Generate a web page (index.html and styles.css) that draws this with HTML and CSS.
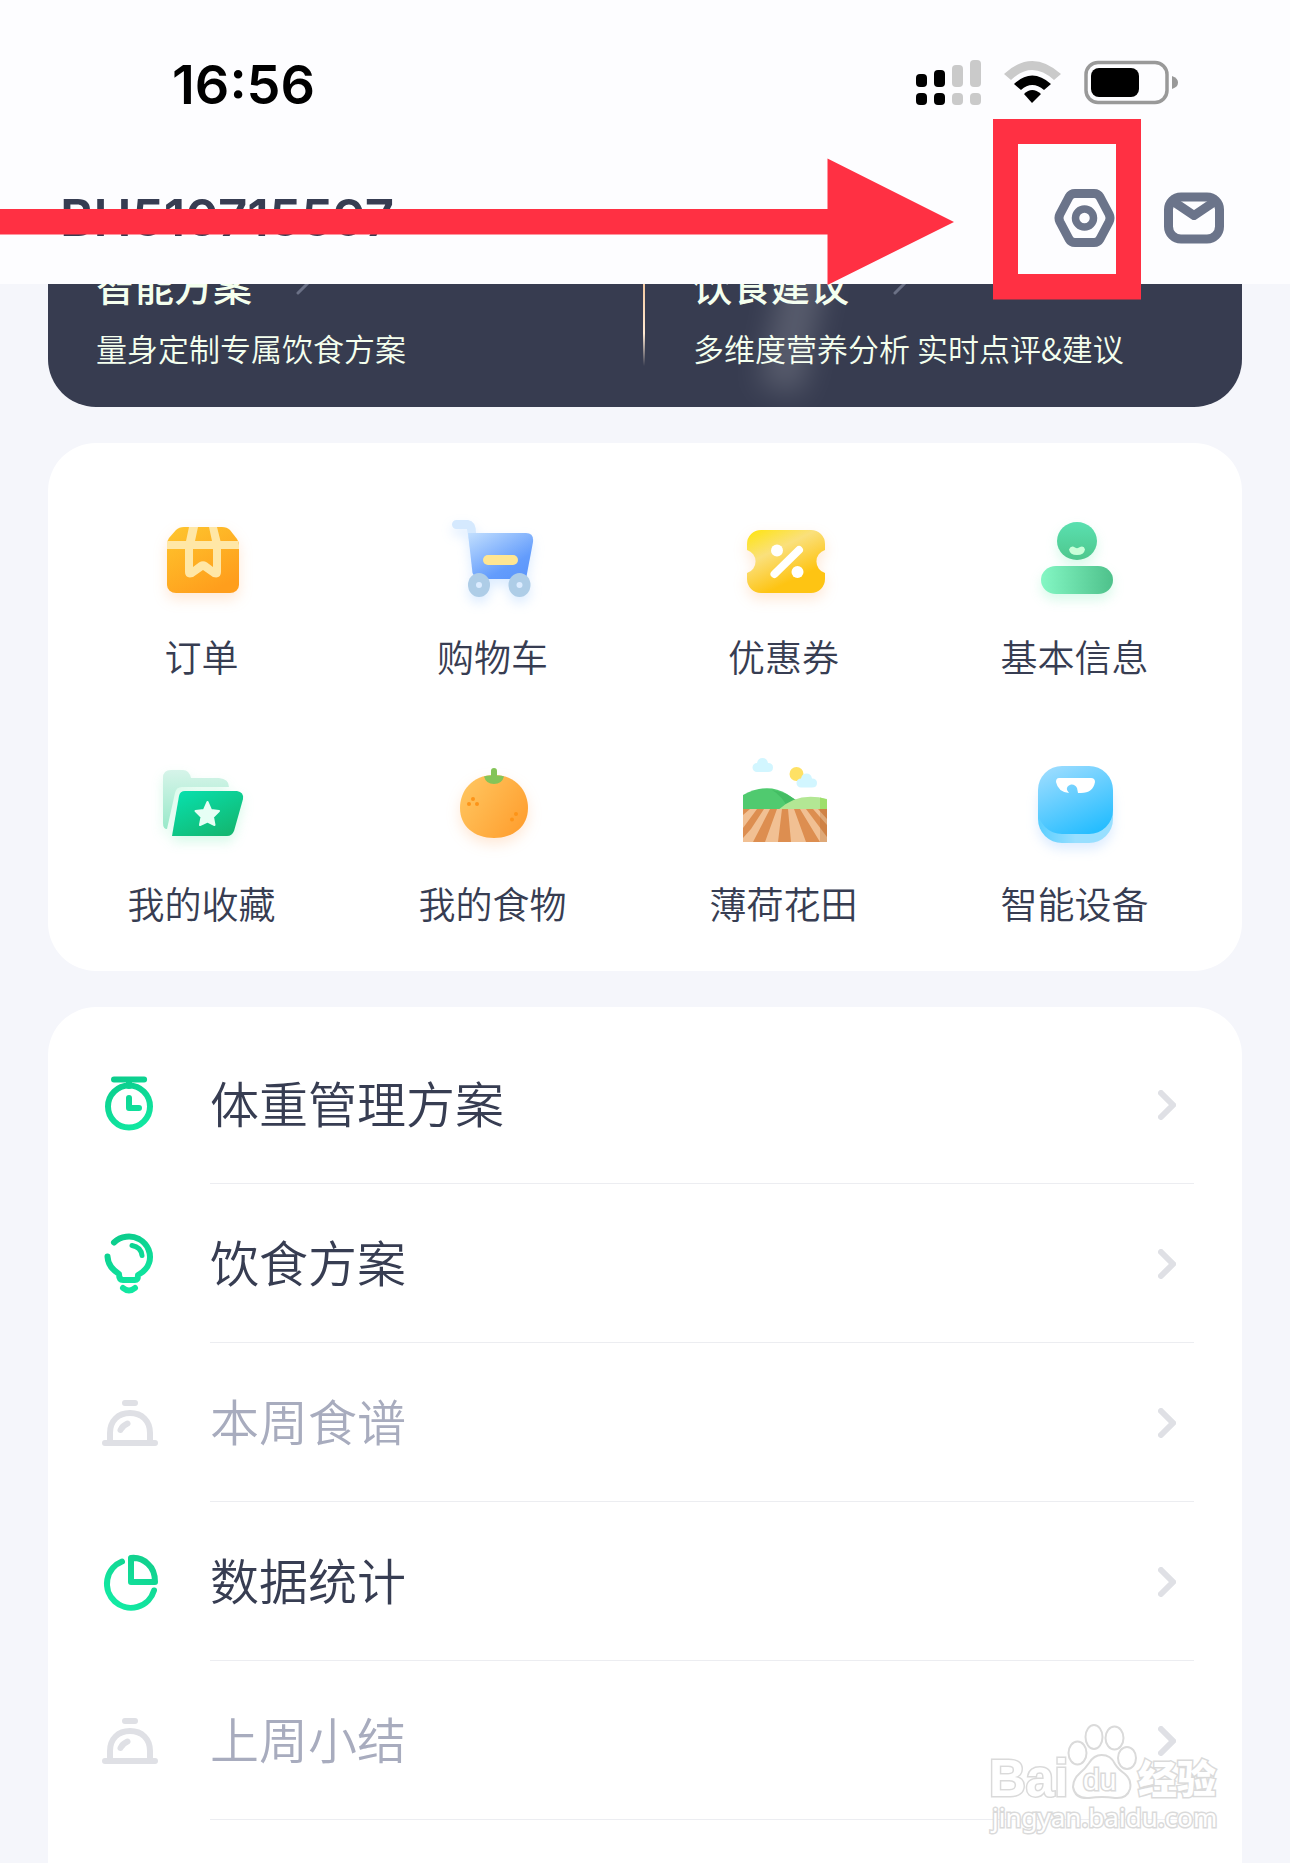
FILE: index.html
```html
<!DOCTYPE html>
<html lang="zh-CN">
<head>
<meta charset="utf-8">
<meta name="viewport" content="width=device-width, initial-scale=1">
<title>我的</title>
<link rel="stylesheet" href="styles.css">
</head>
<body>
<div class="page">
  <header class="header">
    <div class="status">
      <time class="clock">16:56</time>
      <svg class="status-icons" viewBox="914 56 264 52" aria-hidden="true">
        <g fill="#000">
          <rect x="916" y="74" width="11" height="13" rx="4"/><rect x="934" y="70" width="11" height="17" rx="4"/>
          <rect x="916" y="93" width="11" height="12" rx="4"/><rect x="934" y="93" width="11" height="12" rx="4"/>
        </g>
        <g fill="#cacaca">
          <rect x="952" y="65" width="11" height="22" rx="4"/><rect x="970" y="60" width="11" height="27" rx="4"/>
          <rect x="952" y="93" width="11" height="12" rx="4"/><rect x="970" y="93" width="11" height="12" rx="4"/>
        </g>
        <path d="M1004 74Q1032 48 1061 74L1054 80Q1032 60 1011 80Z" fill="#cacaca"/>
        <path d="M1014 84Q1032 67 1051 84L1044 90Q1032 80 1021 90Z" fill="#000"/>
        <path d="M1024 94Q1032 86 1041 94L1032 103Z" fill="#000"/>
        <rect x="1086" y="62.500" width="81" height="40" rx="12" fill="none" stroke="#999" stroke-width="3.500"/>
        <rect x="1091" y="68" width="48" height="29" rx="8" fill="#000"/>
        <path d="M1172 76Q1178 78 1178 82.500T1172 89Z" fill="#999"/>
      </svg>
    </div>
    <div class="titlebar">
      <h1 class="user">BH510715597</h1>
      <div class="actions">
        <button class="icon-button" type="button" aria-label="设置">
          <svg viewBox="1053 187 62 62"><g fill="none" stroke="#6b748a" stroke-width="9" stroke-linejoin="round"><path d="M1075 193.500H1094Q1098 193.500 1100 197L1109 214Q1111 218 1109 222L1100 239Q1098 242.500 1094 242.500H1075Q1071 242.500 1069 239L1060 222Q1058 218 1060 214L1069 197Q1071 193.500 1075 193.500Z"/><circle cx="1084.500" cy="218" r="9" stroke-width="7.500"/></g></svg>
        </button>
        <button class="icon-button" type="button" aria-label="消息">
          <svg viewBox="1163 187 62 62"><g fill="none" stroke="#6b748a" stroke-width="9" stroke-linejoin="round"><rect x="1168.500" y="197" width="51" height="42" rx="12.500"/><path d="M1171 200L1194 215.500L1217 200"/></g></svg>
        </button>
      </div>
    </div>
  </header>

  <main class="content">
    <section class="promo">
      <a class="promo-item" href="#plan">
        <span class="promo-title">智能方案 <svg class="promo-arrow" viewBox="0 0 14 22"><path d="M2 2L11 11L2 20"/></svg></span>
        <span class="promo-sub">量身定制专属饮食方案</span>
      </a>
      <a class="promo-item" href="#advice">
        <span class="promo-title">饮食建议 <svg class="promo-arrow" viewBox="0 0 14 22"><path d="M2 2L11 11L2 20"/></svg></span>
        <span class="promo-sub">多维度营养分析 实时点评&amp;建议</span>
      </a>
    </section>

    <nav class="card grid" aria-label="功能">
      <a class="tile" href="#orders">
        <svg class="tile-icon" viewBox="152 510 100 100">
          <defs><linearGradient id="box" x1="0" y1="0" x2=".6" y2="1"><stop stop-color="#fec62e"/><stop offset="1" stop-color="#ff9e1c"/></linearGradient></defs>
          <path class="glow-orange" fill="url(#box)" d="M167 544Q167 541 169 538L176 530Q179 527 184 527H222Q227 527 230 530L237 539Q239 542 239 545V585A9 8 0 0 1 230 593H176A9 8 0 0 1 167 585Z"/>
          <path fill="#ffe7a6" d="M167 541H186L189 527H198L195 541H212L209 527H217L220.500 541H238L239 545V549H221V572Q221 579 213 577L203 570L193 577Q185 579 185 572V549H167ZM193 549V567L199 562.500Q203 560 207 562.500L213 567V549Z"/>
        </svg><span>订单</span></a>
      <a class="tile" href="#cart">
        <svg class="tile-icon" viewBox="443 510 100 100">
          <defs><linearGradient id="cart" x1="0" y1="0" x2=".8" y2="1"><stop stop-color="#c2dffe"/><stop offset=".75" stop-color="#639cfc"/><stop offset="1" stop-color="#5c96fb"/></linearGradient></defs>
          <g class="glow-blue">
            <path fill="#d5e9fe" d="M456.500 520H468Q476 521 476 533L477 548H470L467 529H456.500A4.500 4.500 0 0 1 456.500 520Z"/>
            <path fill="url(#cart)" d="M468 533H526Q534 533 533 542L526 579H476L472.500 573Z"/>
            <ellipse cx="479" cy="585" rx="11" ry="12" fill="#aecde7"/><ellipse cx="519.500" cy="585" rx="11" ry="12" fill="#aecde7"/>
          </g>
          <circle cx="479" cy="585" r="3" fill="#dcecff"/><circle cx="519.500" cy="585" r="3" fill="#dcecff"/>
          <rect x="483" y="555" width="35" height="10" rx="5" fill="#ffe692"/>
        </svg><span>购物车</span></a>
      <a class="tile" href="#coupons">
        <svg class="tile-icon" viewBox="733 510 100 100">
          <defs><linearGradient id="ticket" x1=".1" y1="0" x2=".7" y2="1"><stop stop-color="#fee418"/><stop offset=".35" stop-color="#fae07c"/><stop offset=".8" stop-color="#fec413"/></linearGradient></defs>
          <path class="glow-orange" fill="url(#ticket)" d="M760 530H810A14 14 0 0 1 824 544V550A12 12 0 0 0 824 573V579A14 14 0 0 1 810 593H760A14 14 0 0 1 746 579V573A12 12 0 0 0 746 550V544A14 14 0 0 1 760 530Z"/>
          <circle cx="776" cy="550.500" r="6" fill="#fff"/><circle cx="796.500" cy="572" r="6" fill="#fff"/><path d="M798 550L773.500 574" stroke="#fff" stroke-width="8" stroke-linecap="round"/>
        </svg><span>优惠券</span></a>
      <a class="tile" href="#profile">
        <svg class="tile-icon" viewBox="1024 510 100 100">
          <defs><linearGradient id="head" x1="0" y1="0" x2="0" y2="1"><stop stop-color="#5ae0b0"/><stop offset="1" stop-color="#4ec78d"/></linearGradient><linearGradient id="torso"><stop stop-color="#84f7c4"/><stop offset="1" stop-color="#4ec18b"/></linearGradient></defs>
          <g class="glow-green"><ellipse cx="1076" cy="541" rx="20" ry="19" fill="url(#head)"/><rect x="1040" y="566" width="72" height="28" rx="15" ry="14" fill="url(#torso)"/></g>
          <path fill="#c9ffd9" d="M1068 549.500Q1070 545 1074 547.500Q1076 549 1078 547.500Q1083 545 1084 549.500Q1083 555 1076 555T1068 549.500Z"/>
        </svg><span>基本信息</span></a>
      <a class="tile" href="#favorites">
        <svg class="tile-icon" viewBox="152 757 100 100">
          <defs><linearGradient id="back" x1="0" y1="0" x2="0" y2="1"><stop stop-color="#d6f4e9"/><stop offset="1" stop-color="#98e9c9"/></linearGradient><linearGradient id="front" x1="0" y1="0" x2=".7" y2="1"><stop stop-color="#07e2b0"/><stop offset="1" stop-color="#13b872"/></linearGradient></defs>
          <g class="glow-green">
            <path fill="url(#back)" d="M171 770H183Q189 770 191 778H219Q229 779 229 787H182Q176 787 175 793L167 829Q163 829 163 823V778Q163 770 171 770Z"/>
            <path fill="url(#front)" d="M185 791H237Q244 792 243 799L234 831Q232 836 227 836H172L179 796Q180 791 185 791Z"/>
          </g>
          <path fill="#e6fff5" stroke="#e6fff5" stroke-width="2" stroke-linejoin="round" d="M207.500 802L211 810L219 811L213 817L214.500 825L207.500 821.500L200 825L201.500 817L195.500 811L204 810Z"/>
        </svg><span>我的收藏</span></a>
      <a class="tile" href="#foods">
        <svg class="tile-icon" viewBox="443 757 100 100">
          <defs><linearGradient id="orange" x1="0" y1=".2" x2="1" y2=".8"><stop stop-color="#ffc55f"/><stop offset="1" stop-color="#ff9e2e"/></linearGradient></defs>
          <path class="glow-orange" fill="url(#orange)" d="M494 775C516 775 528 791 528 808C528 826 514 838 494 838S460 826 460 808C460 791 472 775 494 775Z"/>
          <path fill="#84c458" d="M484 776.500Q488 775 491 775.500V771Q491 768 494 768T497 771V775.500Q501 775 504 776.500Q502 784 494 784T484 776.500Z"/>
          <g fill="#fd9418"><circle cx="473" cy="799" r="2"/><circle cx="469" cy="804" r="2"/><circle cx="477" cy="804" r="2"/><circle cx="516" cy="814" r="2"/><circle cx="512" cy="819.500" r="2"/></g>
        </svg><span>我的食物</span></a>
      <a class="tile" href="#field">
        <svg class="tile-icon" viewBox="734 757 100 100">
          <circle cx="796.500" cy="774" r="7" fill="#fee165"/>
          <path id="cloud" fill="#d2f6ff" d="M757 772A4.500 4.500 0 0 1 757 763Q758 758 762.500 758T768 763Q773 763 773 767.500T768 772Z"/>
          <use href="#cloud" x="44" y="15.500"/>
          <path fill="#50ca6f" d="M743 795Q767 782 787 794L797 801V810H743Z"/><path fill="#43bd63" d="M772 790Q785 792 796 800L788 808Q782 796 772 790Z"/>
          <path fill="#b3e794" d="M778 810Q798 791 827 799V810Z"/><path fill="#9fdf6c" d="M820 797.500L827 799.500V810H820Z"/>
          <path fill="#f1c093" d="M743 809H827V842H743Z"/>
          <path fill="#dd8e50" d="M743 809H750L743 815ZM757 809H764L751 829L743 838V828ZM770 809H777L765 842H753ZM782 809H788L791 842H778ZM794 809H800L820 842H806ZM806 809H813L827 825V837ZM818 809H827V819Z"/>
          <path fill="#a85e23" opacity=".25" d="M820 809H827V842H820Z"/>
        </svg><span>薄荷花田</span></a>
      <a class="tile" href="#devices">
        <svg class="tile-icon" viewBox="1024 757 100 100">
          <defs><linearGradient id="scale" x1=".2" y1="0" x2=".7" y2="1"><stop stop-color="#9bdcff"/><stop offset="1" stop-color="#25bdff"/></linearGradient><linearGradient id="base"><stop stop-color="#59ceff"/><stop offset=".5" stop-color="#98dfff"/></linearGradient></defs>
          <rect class="glow-blue" x="1037" y="775" width="75" height="68" rx="24" fill="url(#base)"/>
          <rect x="1037" y="766" width="75" height="68" rx="24" fill="url(#scale)"/>
          <path fill="#fff" d="M1058 778H1090Q1094 778 1094 782Q1092 793 1080 793H1077L1076 788Q1074 784 1070 784.500Q1065 786 1066 790L1068 793Q1057 792 1055 782Q1055 778 1058 778Z"/>
        </svg><span>智能设备</span></a>
    </nav>

    <nav class="card list" aria-label="服务">
      <a class="row" href="#weight">
        <svg class="row-icon" viewBox="89 1065 80 80"><defs><linearGradient id="g1" gradientUnits="userSpaceOnUse" x1="115" y1="1075" x2="140" y2="1135"><stop stop-color="#0bcb8b"/><stop offset="1" stop-color="#12eba4"/></linearGradient></defs><g class="line" stroke="url(#g1)"><circle cx="129" cy="1106.500" r="21"/><path d="M114 1079.500H144.100M129 1080V1086M129 1098V1108H139"/></g></svg>
        <span class="row-label">体重管理方案</span><svg class="chevron" viewBox="0 0 18 30"><path d="M3 3L15 15L3 27"/></svg></a>
      <a class="row" href="#diet">
        <svg class="row-icon" viewBox="89 1224 80 80"><defs><linearGradient id="g2" gradientUnits="userSpaceOnUse" x1="115" y1="1234" x2="140" y2="1294"><stop stop-color="#0bcb8b"/><stop offset="1" stop-color="#12eba4"/></linearGradient></defs><g class="line" stroke="url(#g2)"><path d="M114 1242.500C121 1236 131 1235 139 1239C148 1244 152 1254 149 1263Q147 1270 138 1275Q138 1280 135 1280H123Q119 1280 119 1274Q108 1267 107.500 1256.500"/><path d="M132 1245.500Q141 1247 142 1255.500" stroke-width="5"/><path d="M123 1288Q129 1293 135 1288"/></g></svg>
        <span class="row-label">饮食方案</span><svg class="chevron" viewBox="0 0 18 30"><path d="M3 3L15 15L3 27"/></svg></a>
      <a class="row muted" href="#menu">
        <svg class="row-icon" viewBox="89 1701 80 80"><g id="cloche" class="line" stroke="#dfe0e5"><path d="M125 1721H135M110 1758V1751C110 1739 118 1731 130 1731S150 1739 150 1751V1758M105 1761H155M120.500 1748Q122 1744 127.500 1741.500"/></g></svg>
        <span class="row-label">本周食谱</span><svg class="chevron" viewBox="0 0 18 30"><path d="M3 3L15 15L3 27"/></svg></a>
      <a class="row" href="#stats">
        <svg class="row-icon" viewBox="89 1542 80 80"><defs><linearGradient id="g3" gradientUnits="userSpaceOnUse" x1="145" y1="1560" x2="115" y2="1605"><stop stop-color="#12d18e"/><stop offset="1" stop-color="#12eba4"/></linearGradient></defs><g class="line" stroke="url(#g3)"><path d="M122 1561.500A24 24 0 1 0 154 1590.500M131 1558V1582H155Q155 1570 148 1564Q141 1557 131 1558Z"/></g></svg>
        <span class="row-label">数据统计</span><svg class="chevron" viewBox="0 0 18 30"><path d="M3 3L15 15L3 27"/></svg></a>
      <a class="row muted" href="#summary">
        <svg class="row-icon" viewBox="89 1701 80 80"><use href="#cloche"/></svg>
        <span class="row-label">上周小结</span><svg class="chevron" viewBox="0 0 18 30"><path d="M3 3L15 15L3 27"/></svg></a>
    </nav>
  </main>

  <svg class="callout" viewBox="0 0 1290 310" aria-hidden="true">
    <path fill="#ff3043" d="M0 209H827.500V158.500L954 222L827.500 285V234.500H0Z"/>
    <path fill="#ff3043" fill-rule="evenodd" d="M993 119H1141V299.500H993ZM1018 144V274H1116V144Z"/>
  </svg>
  <svg class="watermark" viewBox="980 1715 250 130" role="img" aria-label="Baidu经验">
    <g class="mark" stroke="#dadada">
      <text class="brand" x="989" y="1796">Bai</text>
      <text class="brand-cn" x="1138" y="1793">经验</text>
      <ellipse cx="1077.500" cy="1753" rx="9" ry="11.500"/><ellipse cx="1094" cy="1737" rx="8.500" ry="12"/><ellipse cx="1114.500" cy="1738" rx="9" ry="11.500"/><ellipse cx="1127" cy="1758" rx="9" ry="11"/>
      <path d="M1101.500 1755Q1111 1755 1115 1764Q1118 1769 1125 1774Q1132 1780 1130 1789Q1127 1799 1115 1798Q1102 1796 1089 1798Q1075 1799 1073 1787Q1073 1779 1080 1773Q1085 1769 1089 1763Q1094 1755 1101.500 1755Z"/>
      <text class="brand-du" x="1083" y="1790">du</text>
      <text class="brand-url" x="992" y="1827">jingyan.baidu.com</text>
    </g>
  </svg>
</div>
</body>
</html>
```
FILE: styles.css
```css
* { box-sizing: border-box; }

body {
  margin: 0;
  background: #f5f6fb;
  color: #373d52;
  font-family: "Noto Sans CJK SC", sans-serif;
  font-weight: 350;
}

a { color: inherit; text-decoration: none; }

.page {
  position: relative;
  display: flex;
  flex-direction: column;
  min-height: 100vh;
  overflow: hidden;
}

.header {
  position: relative;
  z-index: 1;
  background: #fdfdff;
}

.status {
  display: flex;
  align-items: center;
  justify-content: space-between;
  height: 152px;
  padding: 12px 112px 0 172px;
}

.clock {
  padding-top: 6px;
  color: #000;
  font: 600 54px/64px Inter, sans-serif;
}

.status-icons { width: 264px; height: 52px; }

.titlebar {
  display: flex;
  align-items: center;
  justify-content: space-between;
  height: 132px;
  padding: 0 65px 0 60px;
}

.user {
  margin: 0;
  font: 600 51px/60px Inter, sans-serif;
}

.actions { display: flex; gap: 48px; }

.icon-button {
  width: 62px;
  height: 62px;
  padding: 0;
  border: 0;
  background: none;
}

.icon-button svg { display: block; }

.content {
  display: flex;
  flex: 1;
  flex-direction: column;
  gap: 36px;
  padding: 0 48px;
}

.promo {
  position: relative;
  display: grid;
  grid-template-columns: 1fr 1fr;
  margin-top: -60px;
  padding: 36px 0 39px;
  border-radius: 0 0 48px 48px;
  background:
    linear-gradient(#f3c9a0, #ffe9d2 60%, transparent) calc(50% - 1px) 60px / 2px 82px no-repeat,
    #373c50;
  color: #f4ffee;
  overflow: hidden;
}

.promo::after {
  position: absolute;
  top: 10px;
  left: 62%;
  width: 44px;
  height: 160px;
  background: #fff;
  content: "";
  filter: blur(14px);
  opacity: .16;
  transform: rotate(12deg) translateX(-30%);
}

.promo-item {
  display: flex;
  flex-direction: column;
  gap: 20px;
  padding-left: 48px;
}

.promo-title {
  display: flex;
  align-items: center;
  gap: 44px;
  font-size: 39px;
  font-weight: 500;
  line-height: 48px;
}

.promo-arrow {
  width: 14px;
  height: 22px;
  fill: none;
  stroke: #6b7186;
  stroke-width: 3;
  stroke-linecap: round;
}

.promo-sub { font-size: 31px; line-height: 40px; }

.card { background: #fff; border-radius: 48px; }

.grid {
  display: grid;
  grid-template-columns: repeat(4, 1fr);
  row-gap: 77px;
  padding: 67px 22px 44px 8px;
}

.tile {
  display: flex;
  flex-direction: column;
  align-items: center;
  gap: 22px;
  font-size: 37px;
  line-height: 48px;
}

.tile-icon { width: 100px; height: 100px; overflow: visible; }

.glow-orange { filter: drop-shadow(0 6px 7px rgba(255, 140, 50, .2)); }
.glow-blue { filter: drop-shadow(0 6px 6px rgba(80, 160, 255, .2)); }
.glow-green { filter: drop-shadow(0 6px 6px rgba(60, 230, 150, .2)); }

.list {
  flex: 1;
  padding: 18px 48px 42px 41px;
  border-radius: 48px 48px 0 0;
}

.row {
  position: relative;
  display: flex;
  align-items: center;
  height: 159px;
  padding-right: 18px;
  font-size: 49px;
  line-height: 60px;
}

.row::after {
  position: absolute;
  right: 0;
  bottom: 0;
  left: 121px;
  border-bottom: 1px solid #ecedf1;
  content: "";
}

.row.muted { color: #a8acbe; }

.row-icon { width: 80px; height: 80px; margin-right: 41px; }
.row-label { flex: 1; padding-bottom: 6px; }

.line {
  fill: none;
  stroke-width: 6;
  stroke-linecap: round;
  stroke-linejoin: round;
}

.chevron {
  width: 18px;
  height: 30px;
  fill: none;
  stroke: #dfe0e5;
  stroke-width: 6;
  stroke-linecap: round;
}

.callout {
  position: absolute;
  z-index: 2;
  top: 0;
  left: 0;
  width: 100%;
  pointer-events: none;
}

.watermark {
  position: absolute;
  right: 60px;
  bottom: 18px;
  width: 250px;
  height: 130px;
  pointer-events: none;
}

.mark { fill: #fff; stroke-width: 2; }
.mark text { paint-order: stroke; stroke-width: 3px; }
.brand { font: 700 51px "Liberation Sans", sans-serif; }
.brand-cn { font: 900 39px "Noto Sans CJK SC", sans-serif; }
.brand-du { font: 400 30px "Liberation Sans", sans-serif; }
.brand-url { font: 400 26px "Noto Sans", sans-serif; }
```
